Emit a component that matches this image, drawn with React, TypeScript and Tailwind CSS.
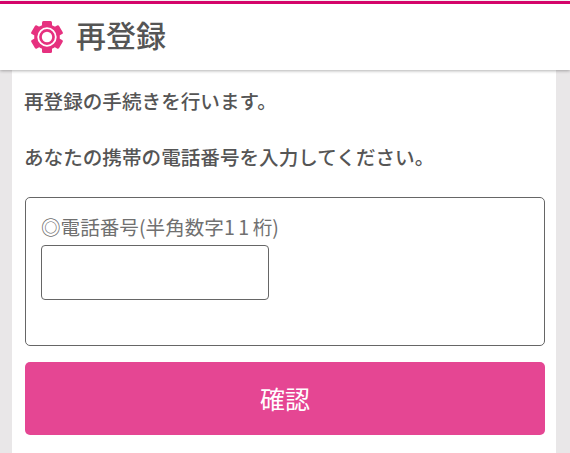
import React from "react";

const font = { fontFamily: '"Noto Sans CJK JP", sans-serif' };

function Gear() {
  const teeth = [0, 60, 120, 180, 240, 300];
  return (
    <svg width="32" height="34" viewBox="0 0 32 34" className="shrink-0">
      <g fill="#e6317f">
        {teeth.map((a) => (
          <rect key={a} x="11" y="1" width="10" height="7" rx="1.5" transform={`rotate(${a} 16 17)`} />
        ))}
        <circle cx="16" cy="17" r="12.8" />
      </g>
      <circle cx="16" cy="17" r="8.8" fill="none" stroke="#ffffff" strokeWidth="1.8" />
      <circle cx="16" cy="17" r="5.2" fill="#ffffff" />
    </svg>
  );
}

export default function App() {
  return (
    <div className="w-[570px] h-[453px] overflow-hidden bg-[#e9e7e8] flex flex-col" style={font}>
      <div className="h-[1px] shrink-0 bg-white" />
      <header className="h-[69px] shrink-0 bg-white border-t-[3px] border-[#d4046a] shadow-[0_1px_3px_rgba(0,0,0,0.3)] flex items-center pl-[31px] gap-[13px] relative z-10">
        <Gear />
        <span className="text-[30px] font-medium text-[#555555] -mt-[5px]">再登録</span>
      </header>
      <main className="ml-[12px] w-[544px] flex-1 bg-white pl-[13px] pr-[11px] flex flex-col">
        <p className="mt-[17px] -ml-[1px] text-[19.6px] leading-[28px] font-medium text-[#555555]">再登録の手続きを行います。</p>
        <p className="mt-[28px] -ml-[1px] text-[19.6px] leading-[28px] font-medium text-[#555555] whitespace-nowrap">あなたの携帯の電話番号を入力してください。</p>
        <section className="mt-[26px] h-[149px] border border-[#666666] rounded-[5px] pl-[15px] pt-[15px]">
          <div className="text-[19.6px] leading-[28px] text-[#707070] whitespace-nowrap">◎電話番号(半角数字<span className="tracking-[3.5px]">11</span>桁)</div>
          <input className="block mt-[4px] w-[228px] h-[55px] bg-white border border-[#666666] rounded-[4px]" />
        </section>
        <button className="mt-[16px] h-[73px] rounded-[5px] bg-[#e54693] text-white text-[25px]">確認</button>
      </main>
    </div>
  );
}
